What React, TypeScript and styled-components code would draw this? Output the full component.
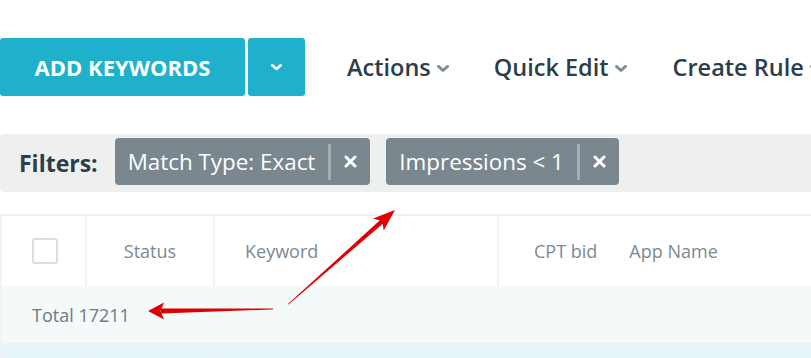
import React from 'react';
import styled, { createGlobalStyle } from 'styled-components';

const GlobalStyle = createGlobalStyle`
  body {
    margin: 0;
    background: #ffffff;
    font-family: "Open Sans", "Liberation Sans", sans-serif;
    overflow: hidden;
  }
`;

const Page = styled.div`
  position: relative;
  width: 811px;
  height: 358px;
  overflow: hidden;
`;

const Toolbar = styled.div`
  display: flex;
  align-items: center;
  padding-top: 38px;
  height: 58px;

  & > * {
    flex-shrink: 0;
  }
`;

const PrimaryButton = styled.button`
  height: 58px;
  width: 245px;
  border: none;
  border-radius: 3px;
  background: #1fb1cc;
  color: #ffffff;
  font-family: inherit;
  font-weight: 700;
  font-size: 22px;
  padding: 0;
  white-space: nowrap;
`;

const CaretButton = styled.button`
  height: 58px;
  width: 57px;
  margin-left: 3px;
  border: none;
  border-radius: 3px;
  background: #1fb1cc;
  display: flex;
  align-items: center;
  justify-content: center;
  padding: 0;
`;

const MenuItem = styled.div<{ $gap: number }>`
  display: flex;
  align-items: center;
  margin-left: ${p => p.$gap}px;
  font-size: 23.5px;
  font-weight: 600;
  color: #2c3e48;
  white-space: nowrap;
  gap: 6px;

  svg {
    margin-top: 4px;
  }
`;

const FilterBar = styled.div`
  display: flex;
  align-items: center;
  margin-top: 38px;
  height: 58px;
  background: #eef0f0;
  border-radius: 4px 0 0 4px;
  padding-left: 19px;

  & > * {
    flex-shrink: 0;
  }
`;

const FilterLabel = styled.span`
  font-size: 23px;
  font-weight: 700;
  color: #2c3e48;
  margin-right: 17px;
`;

const Chip = styled.div`
  display: flex;
  align-items: center;
  height: 47px;
  background: #7a878e;
  border-radius: 4px;
  color: #ffffff;
  font-size: 22.4px;
  margin-right: 16px;
  margin-bottom: 3px;
  padding-left: 13px;
  white-space: nowrap;
`;

const ChipDivider = styled.span`
  width: 3px;
  height: 36px;
  background: #a3adb2;
  margin-left: 13px;
`;

const ChipClose = styled.span`
  width: 39px;
  display: flex;
  align-items: center;
  justify-content: center;
`;

const Table = styled.div`
  margin-top: 22px;
  border-top: 2px solid #f0f1f2;
  border-left: 2px solid #f2f3f4;
`;

const Row = styled.div<{ $bg: string; $height: number }>`
  display: grid;
  grid-template-columns: 85px 128px 284px 1fr;
  height: ${p => p.$height}px;
  background: ${p => p.$bg};
`;

const Cell = styled.div<{ $divider?: boolean; $align?: string; $pad?: number }>`
  display: flex;
  align-items: center;
  justify-content: ${p => p.$align || 'flex-start'};
  padding-left: ${p => p.$pad || 0}px;
  border-right: ${p => (p.$divider ? '2px solid #f1f3f4' : 'none')};
  font-size: 18px;
  color: #7b8a92;
  gap: 32px;
  white-space: nowrap;
`;

const Checkbox = styled.span`
  width: 22px;
  height: 22px;
  border: 2px solid #d9dee1;
  border-radius: 3px;
  margin-left: 30px;
`;

const TotalText = styled.span`
  grid-column: 1 / -1;
  font-size: 18px;
  color: #6d7b84;
  padding-left: 30px;
  align-self: center;
  white-space: nowrap;
`;

const Overlay = styled.svg`
  position: absolute;
  left: 0;
  top: 0;
  pointer-events: none;
`;

const Chevron = ({ color, size }: { color: string; size: number }) => (
  <svg width={size} height={size * 0.6} viewBox="0 0 10 6">
    <path d="M1.2 1.2 L5 4.6 L8.8 1.2" stroke={color} strokeWidth="2.4" fill="none" strokeLinecap="round" strokeLinejoin="round" />
  </svg>
);

const Close = () => (
  <svg width="13" height="13" viewBox="0 0 13 13">
    <path d="M2 2 L11 11 M11 2 L2 11" stroke="#ffffff" strokeWidth="3" strokeLinecap="round" />
  </svg>
);

const filters = ['Match Type: Exact', 'Impressions < 1'];

const App = () => {
  return (
    <Page>
      <GlobalStyle />
      <Toolbar>
        <PrimaryButton>ADD KEYWORDS</PrimaryButton>
        <CaretButton>
          <Chevron color="#ffffff" size={11} />
        </CaretButton>
        <MenuItem $gap={42}>Actions <Chevron color="#7f8d95" size={12} /></MenuItem>
        <MenuItem $gap={45}>Quick Edit <Chevron color="#7f8d95" size={12} /></MenuItem>
        <MenuItem $gap={46}>Create Rule <Chevron color="#7f8d95" size={12} /></MenuItem>
      </Toolbar>

      <FilterBar>
        <FilterLabel>Filters:</FilterLabel>
        {filters.map(f => (
          <Chip key={f}>
            {f}
            <ChipDivider />
            <ChipClose><Close /></ChipClose>
          </Chip>
        ))}
      </FilterBar>

      <Table>
        <Row $bg="#ffffff" $height={70}>
          <Cell $divider><Checkbox /></Cell>
          <Cell $divider $align="center">Status</Cell>
          <Cell $divider $pad={30}>Keyword</Cell>
          <Cell $pad={35}><span>CPT bid</span><span>App Name</span></Cell>
        </Row>
        <Row $bg="#f4f9fa" $height={57}>
          <TotalText>Total 17211</TotalText>
        </Row>
        <Row $bg="#e6f5f8" $height={40}>
          <Cell $divider />
          <Cell $divider />
          <Cell />
          <Cell />
        </Row>
      </Table>

      <Overlay width="811" height="358" viewBox="0 0 811 358">
        <polygon points="288,304 288.6,304.6 383.7,222.9 380.7,219.6" fill="#e10000" />
        <polygon points="395,210 373.1,218.6 382.2,221.3 383.7,230.6" fill="#e10000" />
        <polygon points="273,308.5 273,309.5 161,313.6 161,308.4" fill="#e10000" />
        <polygon points="148,311 164,302.5 160.5,311 164,319.5" fill="#e10000" />
      </Overlay>
    </Page>
  );
};

export default App;
